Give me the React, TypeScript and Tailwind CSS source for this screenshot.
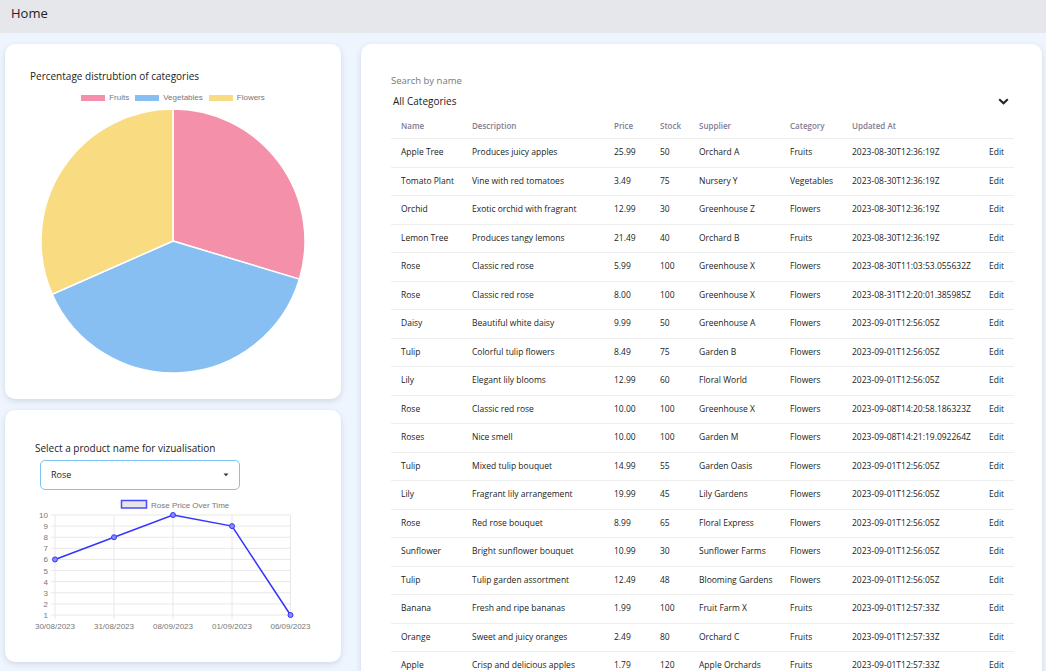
import React from "react";

type Row = [string, string, string, string, string, string, string];

const rows: Row[] = [
  ["Apple Tree", "Produces juicy apples", "25.99", "50", "Orchard A", "Fruits", "2023-08-30T12:36:19Z"],
  ["Tomato Plant", "Vine with red tomatoes", "3.49", "75", "Nursery Y", "Vegetables", "2023-08-30T12:36:19Z"],
  ["Orchid", "Exotic orchid with fragrant", "12.99", "30", "Greenhouse Z", "Flowers", "2023-08-30T12:36:19Z"],
  ["Lemon Tree", "Produces tangy lemons", "21.49", "40", "Orchard B", "Fruits", "2023-08-30T12:36:19Z"],
  ["Rose", "Classic red rose", "5.99", "100", "Greenhouse X", "Flowers", "2023-08-30T11:03:53.055632Z"],
  ["Rose", "Classic red rose", "8.00", "100", "Greenhouse X", "Flowers", "2023-08-31T12:20:01.385985Z"],
  ["Daisy", "Beautiful white daisy", "9.99", "50", "Greenhouse A", "Flowers", "2023-09-01T12:56:05Z"],
  ["Tulip", "Colorful tulip flowers", "8.49", "75", "Garden B", "Flowers", "2023-09-01T12:56:05Z"],
  ["Lily", "Elegant lily blooms", "12.99", "60", "Floral World", "Flowers", "2023-09-01T12:56:05Z"],
  ["Rose", "Classic red rose", "10.00", "100", "Greenhouse X", "Flowers", "2023-09-08T14:20:58.186323Z"],
  ["Roses", "Nice smell", "10.00", "100", "Garden M", "Flowers", "2023-09-08T14:21:19.092264Z"],
  ["Tulip", "Mixed tulip bouquet", "14.99", "55", "Garden Oasis", "Flowers", "2023-09-01T12:56:05Z"],
  ["Lily", "Fragrant lily arrangement", "19.99", "45", "Lily Gardens", "Flowers", "2023-09-01T12:56:05Z"],
  ["Rose", "Red rose bouquet", "8.99", "65", "Floral Express", "Flowers", "2023-09-01T12:56:05Z"],
  ["Sunflower", "Bright sunflower bouquet", "10.99", "30", "Sunflower Farms", "Flowers", "2023-09-01T12:56:05Z"],
  ["Tulip", "Tulip garden assortment", "12.49", "48", "Blooming Gardens", "Flowers", "2023-09-01T12:56:05Z"],
  ["Banana", "Fresh and ripe bananas", "1.99", "100", "Fruit Farm X", "Fruits", "2023-09-01T12:57:33Z"],
  ["Orange", "Sweet and juicy oranges", "2.49", "80", "Orchard C", "Fruits", "2023-09-01T12:57:33Z"],
  ["Apple", "Crisp and delicious apples", "1.79", "120", "Apple Orchards", "Fruits", "2023-09-01T12:57:33Z"],
];

const headers = ["Name", "Description", "Price", "Stock", "Supplier", "Category", "Updated At", ""];

const gridCols = "grid grid-cols-[71px_142px_46px_39px_91px_62px_137px_35px]";

// pie slices, angles clockwise from 12 o'clock
const slices = [
  { label: "Fruits", color: "#f590aa", from: 0, to: 106.8 },
  { label: "Vegetables", color: "#88bff2", from: 106.8, to: 246.2 },
  { label: "Flowers", color: "#f9db81", from: 246.2, to: 360 },
];

function arc(cx: number, cy: number, r: number, a0: number, a1: number) {
  const p = (a: number) => {
    const t = (a * Math.PI) / 180;
    return [cx + r * Math.sin(t), cy - r * Math.cos(t)];
  };
  const [x0, y0] = p(a0);
  const [x1, y1] = p(a1);
  const large = a1 - a0 > 180 ? 1 : 0;
  return `M${cx},${cy} L${x0},${y0} A${r},${r} 0 ${large} 1 ${x1},${y1} Z`;
}

function PieCard() {
  return (
    <div className="h-[355px] rounded-[10px] bg-white shadow-[0_2px_6px_rgba(0,0,0,0.12)] pt-[26px]">
      <div className="pl-[25px] text-[10px] leading-[12px] font-medium text-[#222]">
        Percentage distrubtion of categories
      </div>
      <div className="mt-[11px] flex justify-center items-center gap-[6px] text-[8px] leading-[10px] text-[#777] font-['Liberation_Sans',Arial,sans-serif]">
        {slices.map((s) => (
          <div key={s.label} className="flex items-center gap-[4px]">
            <span className="block w-[24px] h-[6px]" style={{ background: s.color }} />
            <span>{s.label}</span>
          </div>
        ))}
      </div>
      <svg width={336} height={268} viewBox="5 109 336 268" className="mt-[5px] block">
        {slices.map((s) => (
          <path key={s.label} d={arc(173, 242, 132, s.from, s.to)} fill={s.color} stroke="#fff" strokeWidth={1.5} />
        ))}
      </svg>
    </div>
  );
}

function LineCard() {
  const xs = [55, 114, 173, 232, 290.5];
  const labels = ["30/08/2023", "31/08/2023", "08/09/2023", "01/09/2023", "06/09/2023"];
  const vals = [6, 8, 10, 9, 1];
  const y = (v: number) => 615 - ((v - 1) * 100) / 9;
  const pts = xs.map((x, i) => `${x},${y(vals[i])}`).join(" ");
  return (
    <div className="mt-[11px] h-[252px] rounded-[10px] bg-white shadow-[0_2px_6px_rgba(0,0,0,0.12)] pt-[32px]">
      <div className="pl-[30px] text-[10px] leading-[12px] font-medium text-[#222]">
        Select a product name for vizualisation
      </div>
      <div className="ml-[35px] mt-[6px] w-[200px] h-[30px] rounded-[5px] border border-[#7cc3f3] flex items-center justify-between pl-[10px] pr-[10px]">
        <span className="text-[9px] text-[#222]">Rose</span>
        <svg width={6} height={4} viewBox="0 0 6 4">
          <path d="M0.5 0.5 L3 3.2 L5.5 0.5 Z" fill="#333" />
        </svg>
      </div>
      <svg width={336} height={145} viewBox="5 495 336 145" className="mt-[5px] block">
        <rect x={121.5} y={500.5} width={25} height={7.5} fill="#e6e6e6" stroke="#4a4aff" strokeWidth={1.5} />
        <text x={151} y={507.5} fontSize={8} fill="#777" fontFamily="'Liberation Sans', Arial, sans-serif">
          Rose Price Over Time
        </text>
        {Array.from({ length: 10 }, (_, i) => i + 1).map((v) => (
          <g key={v}>
            <line x1={51} x2={290.5} y1={y(v)} y2={y(v)} stroke="#e8e8e8" strokeWidth={1} />
            <text x={48} y={y(v) + 3} fontSize={8} fill="#777" textAnchor="end" fontFamily="'Liberation Sans', Arial, sans-serif">
              {v}
            </text>
          </g>
        ))}
        {xs.map((x, i) => (
          <g key={x}>
            <line x1={x} x2={x} y1={515} y2={619} stroke="#e8e8e8" strokeWidth={1} />
            <text x={x} y={629} fontSize={8} fill="#777" textAnchor="middle" fontFamily="'Liberation Sans', Arial, sans-serif">
              {labels[i]}
            </text>
          </g>
        ))}
        <polyline points={pts} fill="none" stroke="#3434ff" strokeWidth={1.5} />
        {xs.map((x, i) => (
          <circle key={x} cx={x} cy={y(vals[i])} r={2.5} fill="#8a8aff" stroke="#3434ff" strokeWidth={1} />
        ))}
      </svg>
    </div>
  );
}

function ProductTable() {
  return (
    <div className="flex-1 mr-[4px] rounded-[10px] bg-white shadow-[0_2px_6px_rgba(0,0,0,0.12)] pt-[31px] pl-[30px] pr-[28px] min-h-[640px]">
      <div className="text-[9.5px] leading-[12px] text-[#777]">Search by name</div>
      <div className="mt-[8px] flex items-center justify-between pl-[2px] pr-[5px]">
        <span className="text-[10px] leading-[12px] text-[#222]">All Categories</span>
        <svg width={11} height={7} viewBox="0 0 11 7">
          <path d="M1.2 1.2 L5.5 5.3 L9.8 1.2" fill="none" stroke="#222" strokeWidth={2} />
        </svg>
      </div>
      <div className={`${gridCols} h-[26px] items-center border-b border-[#eeeeee] mt-[6px]`}>
        {headers.map((h, i) => (
          <div key={i} className="pl-[10px] text-[8px] font-semibold text-[#827c94]">
            {h}
          </div>
        ))}
      </div>
      {rows.map((r, i) => (
        <div key={i} className={`${gridCols} h-[28.5px] items-center border-b border-[#eeeeee] text-[8.5px] text-[#222]`}>
          {r.map((c, j) => (
            <div key={j} className="pl-[10px] whitespace-nowrap">
              {c}
            </div>
          ))}
          <div className="pl-[10px]">Edit</div>
        </div>
      ))}
    </div>
  );
}

export default function App() {
  return (
    <div className="min-h-screen bg-[#eef5ff] font-['Open_Sans',sans-serif]">
      <div className="h-[33px] bg-[#e5e7eb] pl-[11px] pt-[4px] text-[13px] leading-[18px] text-[#222]">Home</div>
      <div className="flex gap-[20px] pl-[5px] pt-[11px]">
        <div className="w-[336px] shrink-0">
          <PieCard />
          <LineCard />
        </div>
        <ProductTable />
      </div>
    </div>
  );
}
